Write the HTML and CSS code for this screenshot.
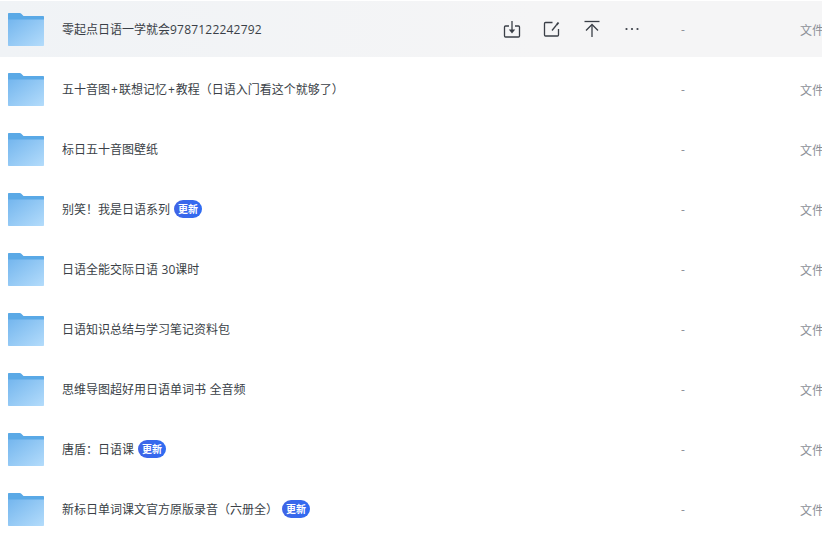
FILE: index.html
```html
<!DOCTYPE html>
<html lang="zh-CN">
<head>
  <meta charset="UTF-8">
  <meta name="viewport" content="width=device-width, initial-scale=1.0">
  <title>文件列表</title>
  <link rel="stylesheet" href="styles.css">
</head>
<body>
  <svg class="defs" width="0" height="0" aria-hidden="true">
    <defs>
      <linearGradient id="folder-body" x1="0" y1="0" x2="1" y2="1">
        <stop offset="0" stop-color="#74b6ee"/>
        <stop offset="1" stop-color="#b4dcfb"/>
      </linearGradient>
      <symbol id="folder" viewBox="0 0 36 33" preserveAspectRatio="none">
        <path d="M0 1C0 .4.4 0 1 0h10.800c.6 0 1.100.2 1.500.7L15.500 3H35c.6 0 1 .4 1 1v4H0z" fill="#5aa9e6"/>
        <path d="M0 6.500h36V32c0 .6-.4 1-1 1H1c-.6 0-1-.4-1-1z" fill="url(#folder-body)"/>
      </symbol>
    </defs>
  </svg>

  <div class="file-list">
    <div class="file-row active">
      <svg class="folder"><use href="#folder"/></svg>
      <div class="file-name"><span>零起点日语一学就会<b class="num">9787122242792</b></span></div>
      <div class="file-actions">
        <svg viewBox="0 0 18 18"><path d="M6 6H2.500a1 1 0 0 0-1 1v9a1 1 0 0 0 1 1h13a1 1 0 0 0 1-1V7a1 1 0 0 0-1-1H12"/><path d="M9 1v9"/><path class="solid" d="M5.800 9.500h6.400L9 13.500z"/></svg>
        <svg viewBox="0 0 18 18"><path d="M9.500 2.500H2.500a1 1 0 0 0-1 1v11.500a1 1 0 0 0 1 1h12a1 1 0 0 0 1-1V9"/><path d="M9 10.500L13.500 5"/><path class="thick" d="M13.500 5l2-2.500"/></svg>
        <svg viewBox="0 0 18 18"><path d="M1.500 1.500h15"/><path d="M9 17V5"/><path d="M3 10.500L9 4.500l6 6"/></svg>
        <svg viewBox="0 0 18 18"><circle class="solid" cx="3.500" cy="9" r="1.100"/><circle class="solid" cx="9" cy="9" r="1.100"/><circle class="solid" cx="14.500" cy="9" r="1.100"/></svg>
      </div>
      <div class="file-size">-</div>
      <div class="file-type">文件夹</div>
    </div>
    <div class="file-row">
      <svg class="folder"><use href="#folder"/></svg>
      <div class="file-name"><span>五十音图<b class="plus">+</b>联想记忆<b class="plus">+</b>教程（日语入门看这个就够了）</span></div>
      <div class="file-size">-</div>
      <div class="file-type">文件夹</div>
    </div>
    <div class="file-row">
      <svg class="folder"><use href="#folder"/></svg>
      <div class="file-name"><span>标日五十音图壁纸</span></div>
      <div class="file-size">-</div>
      <div class="file-type">文件夹</div>
    </div>
    <div class="file-row">
      <svg class="folder"><use href="#folder"/></svg>
      <div class="file-name"><span>别笑！我是日语系列</span><i class="badge">更新</i></div>
      <div class="file-size">-</div>
      <div class="file-type">文件夹</div>
    </div>
    <div class="file-row">
      <svg class="folder"><use href="#folder"/></svg>
      <div class="file-name"><span>日语全能交际日语 30课时</span></div>
      <div class="file-size">-</div>
      <div class="file-type">文件夹</div>
    </div>
    <div class="file-row">
      <svg class="folder"><use href="#folder"/></svg>
      <div class="file-name"><span>日语知识总结与学习笔记资料包</span></div>
      <div class="file-size">-</div>
      <div class="file-type">文件夹</div>
    </div>
    <div class="file-row">
      <svg class="folder"><use href="#folder"/></svg>
      <div class="file-name"><span>思维导图超好用日语单词书 全音频</span></div>
      <div class="file-size">-</div>
      <div class="file-type">文件夹</div>
    </div>
    <div class="file-row">
      <svg class="folder"><use href="#folder"/></svg>
      <div class="file-name"><span>唐盾：日语课</span><i class="badge">更新</i></div>
      <div class="file-size">-</div>
      <div class="file-type">文件夹</div>
    </div>
    <div class="file-row">
      <svg class="folder"><use href="#folder"/></svg>
      <div class="file-name"><span>新标日单词课文官方原版录音（六册全）</span><i class="badge">更新</i></div>
      <div class="file-size">-</div>
      <div class="file-type">文件夹</div>
    </div>
  </div>
</body>
</html>
```

FILE: styles.css
```css
html, body {
  height: 100%;
  overflow: hidden;
}

body {
  margin: 0;
  background: #fff;
  font-family: "Open Sans", "Noto Sans CJK SC", sans-serif;
  font-size: 12px;
  color: #3a3f47;
}

.defs {
  display: block;
  height: 0;
}

.file-list {
  display: flex;
  flex-direction: column;
  gap: 4px;
  padding-top: 1px;
  width: 900px;
}

.file-row {
  display: grid;
  grid-template-columns: 54px 441px 178px 119px auto;
  align-items: center;
  flex: none;
  height: 56px;
  padding-left: 8px;
}

.file-row.active {
  background: linear-gradient(90deg, #f0f3f6, #f5f5f6 60%);
}

.folder {
  width: 36px;
  height: 33px;
  margin-top: 1px;
}

.file-name {
  grid-column: 2;
  display: flex;
  align-items: center;
  line-height: 20px;
  word-spacing: 0.5px;
}

.file-name span {
  padding-top: 2px;
}

.num {
  font-weight: 400;
  letter-spacing: 0.2px;
}

.plus {
  margin: 0 1px;
  font-weight: 400;
}

.file-actions {
  grid-column: 3;
  display: flex;
  gap: 22px;
}

.file-actions svg {
  width: 18px;
  height: 18px;
  fill: none;
  stroke: #3a3f47;
  stroke-width: 1.300;
}

.file-actions .solid {
  fill: #3a3f47;
  stroke: none;
}

.file-actions .thick {
  stroke-width: 2;
}

.file-size {
  grid-column: 4;
  color: #8c9098;
}

.file-type {
  grid-column: 5;
  margin-top: 2px;
  color: #8c9098;
  white-space: nowrap;
}

.badge {
  display: inline-block;
  width: 28px;
  height: 18px;
  margin-left: 4px;
  border-radius: 9px;
  background: linear-gradient(90deg, #3f64e6, #2f6cf2);
  color: #fff;
  font-size: 10px;
  font-style: normal;
  font-weight: 700;
  line-height: 18px;
  text-align: center;
}
```
